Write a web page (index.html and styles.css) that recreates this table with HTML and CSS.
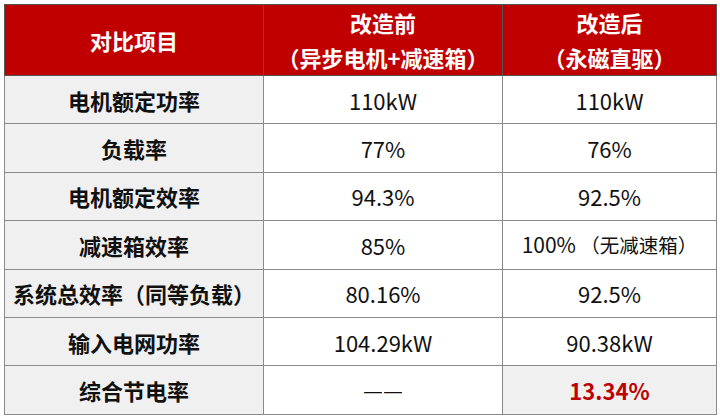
FILE: index.html
```html
<!DOCTYPE html>
<html lang="zh-CN">
<head>
<meta charset="utf-8">
<link rel="stylesheet" href="styles.css">
</head>
<body>
<div class="wrap">
<table class="cmp">
  <colgroup>
    <col class="c1"><col class="c2"><col class="c3">
  </colgroup>
  <thead>
    <tr>
      <th>对比项目</th>
      <th>改造前<br>（异步电机+减速箱）</th>
      <th>改造后<br>（永磁直驱）</th>
    </tr>
  </thead>
  <tbody>
    <tr><td class="k">电机额定功率</td><td>110kW</td><td>110kW</td></tr>
    <tr><td class="k">负载率</td><td>77%</td><td>76%</td></tr>
    <tr><td class="k">电机额定效率</td><td>94.3%</td><td>92.5%</td></tr>
    <tr><td class="k">减速箱效率</td><td>85%</td><td class="small"><span class="num">100%</span> （无减速箱）</td></tr>
    <tr><td class="k">系统总效率（同等负载）</td><td>80.16%</td><td>92.5%</td></tr>
    <tr><td class="k">输入电网功率</td><td>104.29kW</td><td>90.38kW</td></tr>
    <tr><td class="k">综合节电率</td><td class="dash"><span>—</span><span>—</span></td><td class="hl">13.34%</td></tr>
  </tbody>
</table>
</div>
</body>
</html>
```
FILE: styles.css
```css
html, body {
  margin: 0;
  padding: 0;
  background: #ffffff;
}
.wrap {
  padding: 4px;
}
.cmp {
  width: 712px;
  border-collapse: collapse;
  table-layout: fixed;
  font-family: "Noto Sans CJK SC", "Noto Sans", sans-serif;
  color: #111;
  border: 1.5px solid #555;
}
.c1 { width: 259px; }
.c2 { width: 239px; }
.c3 { width: 214px; }
.cmp th {
  background: #c00000;
  color: #fff;
  font-weight: 700;
  font-size: 22px;
  line-height: 35px;
  height: 68px;
  padding: 0;
  text-align: center;
  vertical-align: middle;
  border: 1px solid #555;
}
.cmp td {
  height: 47.4px;
  padding: 0;
  text-align: center;
  vertical-align: middle;
  font-size: 22px;
  line-height: 30px;
  font-weight: 400;
  border: 1px solid #8a8a8a;
}
.cmp td.k {
  background: #f0f0f0;
  font-weight: 700;
}
.cmp td.small {
  font-size: 19.5px;
}
.cmp td.small .num {
  font-size: 21px;
}
.cmp td.dash {
  font-family: "Liberation Sans", sans-serif;
  font-size: 18px;
}
.cmp td.dash span {
  display: inline-block;
  width: 18px;
  overflow: hidden;
  vertical-align: middle;
  line-height: 20px;
  margin: 0 1px;
}
.cmp td.hl {
  background: #f0f0f0;
  color: #c00000;
  font-weight: 700;
}
```
